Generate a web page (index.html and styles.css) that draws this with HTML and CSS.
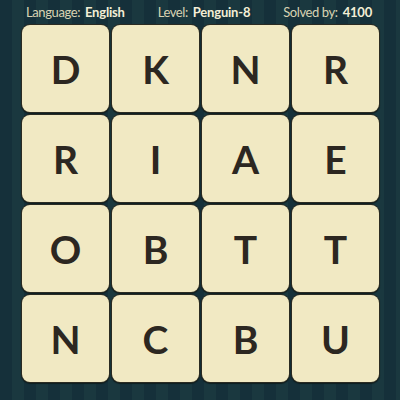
FILE: index.html
```html
<!DOCTYPE html>
<html>
<head>
<meta charset="utf-8">
<link rel="stylesheet" href="styles.css">
</head>
<body>
<div class="page">
  <div class="header">
    <span class="item">Language: <b>English</b></span>
    <span class="item">Level: <b>Penguin-8</b></span>
    <span class="item">Solved by: <b>4100</b></span>
  </div>
  <div class="board">
    <div class="tile">D</div><div class="tile">K</div><div class="tile">N</div><div class="tile">R</div>
    <div class="tile">R</div><div class="tile">I</div><div class="tile">A</div><div class="tile">E</div>
    <div class="tile">O</div><div class="tile">B</div><div class="tile">T</div><div class="tile">T</div>
    <div class="tile">N</div><div class="tile">C</div><div class="tile">B</div><div class="tile">U</div>
  </div>
</div>
</body>
</html>
```
FILE: styles.css
```css
html, body {
  margin: 0;
  padding: 0;
}
body {
  width: 400px;
  height: 400px;
  overflow: hidden;
  background: repeating-linear-gradient(90deg, #15303a 0px, #15303a 12px, #1a383f 12px, #1a383f 24px);
  background-color: #163238;
  font-family: "Lato", "Open Sans", sans-serif;
}
.page {
  display: flex;
  flex-direction: column;
  padding-top: 1px;
}
.header {
  display: flex;
  justify-content: space-between;
  padding: 0 28px 0 26px;
  height: 21px;
  align-items: center;
  font-size: 13px;
  letter-spacing: -0.4px;
  color: #d8d3b3;
}
.header b {
  color: #f3eed6;
  font-weight: 700;
  margin-left: 2px;
  letter-spacing: -0.2px;
}
.board {
  display: grid;
  grid-template-columns: repeat(4, 87px);
  grid-auto-rows: 87px;
  gap: 3px;
  margin-left: 22px;
  margin-top: 3px;
}
.tile {
  background: #f1e9c3;
  border-radius: 8px;
  box-shadow: 0 0 0 1px #2b2b22, 0 1px 1px 1px #0e1e20;
  display: flex;
  align-items: center;
  justify-content: center;
  font-size: 39px;
  font-weight: 700;
  color: #2c2721;
  padding-top: 1px;
}
```
